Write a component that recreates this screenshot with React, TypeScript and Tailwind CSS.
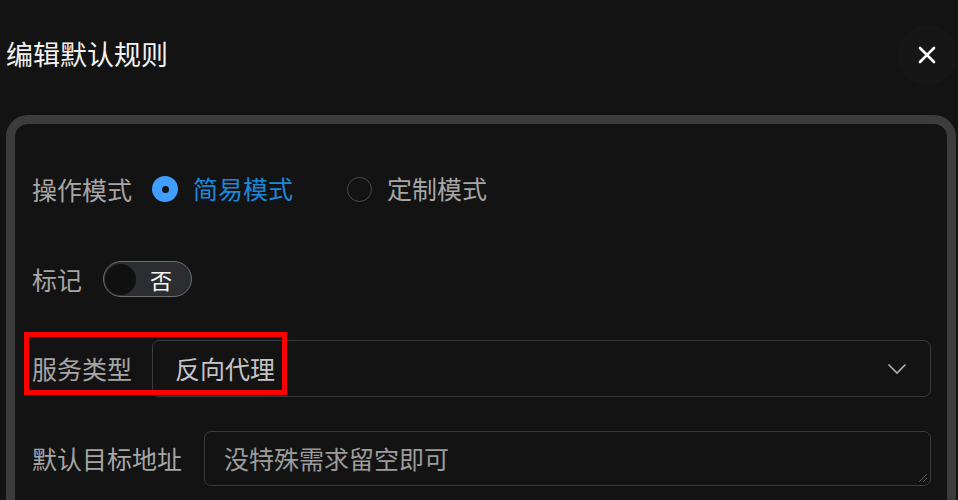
import React from "react";

const font = { fontFamily: '"Noto Sans CJK SC", "Noto Sans", sans-serif' };

export default function App() {
  return (
    <div className="w-[958px] h-[500px] overflow-hidden bg-[#131313] relative" style={font}>
      {/* Header */}
      <div className="flex items-center justify-between h-[110px] pl-[6px] pr-[1px]">
        <div className="text-[27px] leading-[34px] text-[#f2f2f2] mt-[-2px]">编辑默认规则</div>
        <button className="w-[60px] h-[60px] rounded-full bg-[#161616] flex items-center justify-center mt-[-1px]">
          <svg width="18" height="18" viewBox="0 0 18 18">
            <path d="M2 2 L16 16 M16 2 L2 16" stroke="#ffffff" strokeWidth="2.6" strokeLinecap="round" />
          </svg>
        </button>
      </div>

      {/* Card */}
      <div className="ml-[6px] mt-[5px] w-[950px] h-[420px] border-[9px] border-[#3c3c3c] rounded-[22px] bg-[#131313] pl-[17px] pr-[16px] pt-[45px]">
        {/* Row 1 */}
        <div className="flex items-center h-[40px]">
          <span className="text-[25px] text-[#a6a6a6] leading-[40px]">操作模式</span>
          <div className="flex items-center ml-[20px]">
            <span className="w-[26px] h-[26px] rounded-full bg-[#409eff] flex items-center justify-center">
              <span className="w-[7px] h-[7px] rounded-full bg-[#141414]" />
            </span>
            <span className="ml-[15px] text-[25px] text-[#1a88dc]">简易模式</span>
          </div>
          <div className="flex items-center ml-[54px]">
            <span className="w-[25px] h-[25px] rounded-full border border-[#4a4a4a] bg-[#131313]" />
            <span className="ml-[15px] text-[25px] text-[#a6a6a6]">定制模式</span>
          </div>
        </div>

        {/* Row 2 */}
        <div className="flex items-center mt-[52px] h-[36px]">
          <span className="text-[25px] text-[#a6a6a6] leading-[36px]">标记</span>
          <div className="ml-[21px] w-[89px] h-[36px] rounded-full border border-[#6e6e72] bg-[#2c2d31] flex items-center pl-[1px]">
            <span className="w-[31px] h-[31px] rounded-full bg-[#101010]" />
            <span className="ml-[14px] text-[22px] text-[#f5f5f5] leading-none">否</span>
          </div>
        </div>

        {/* Row 3 */}
        <div className="relative flex items-center mt-[43px] h-[57px]">
          <span className="text-[25px] text-[#a6a6a6] leading-[57px]">服务类型</span>
          <div className="ml-[20px] flex-1 h-[57px] rounded-[7px] border border-[#3a3b40] flex items-center justify-between pl-[22px] pr-[23px]">
            <span className="text-[25px] text-[#c4c4c4]">反向代理</span>
            <svg width="20" height="12" viewBox="0 0 20 12">
              <path d="M1.5 1.5 L10 10 L18.5 1.5" stroke="#b0b0b0" strokeWidth="1.6" fill="none" />
            </svg>
          </div>
          <div className="absolute left-[-8px] top-[-8px] w-[263px] h-[63px] border-[5px] border-[#ff0000] pointer-events-none" />
        </div>

        {/* Row 4 */}
        <div className="flex items-center mt-[34px] h-[55px]">
          <span className="text-[25px] text-[#a6a6a6] leading-[55px]">默认目标地址</span>
          <div className="ml-[22px] flex-1 h-[55px] rounded-[7px] border border-[#3a3b40] relative flex items-center pl-[19px]">
            <span className="text-[25px] text-[#9c9c9c]">没特殊需求留空即可</span>
            <svg className="absolute right-[2px] bottom-[2px]" width="12" height="12" viewBox="0 0 12 12">
              <path d="M11 3 L3 11 M11 7 L7 11" stroke="#5a5a5a" strokeWidth="1" />
            </svg>
          </div>
        </div>
      </div>
    </div>
  );
}
